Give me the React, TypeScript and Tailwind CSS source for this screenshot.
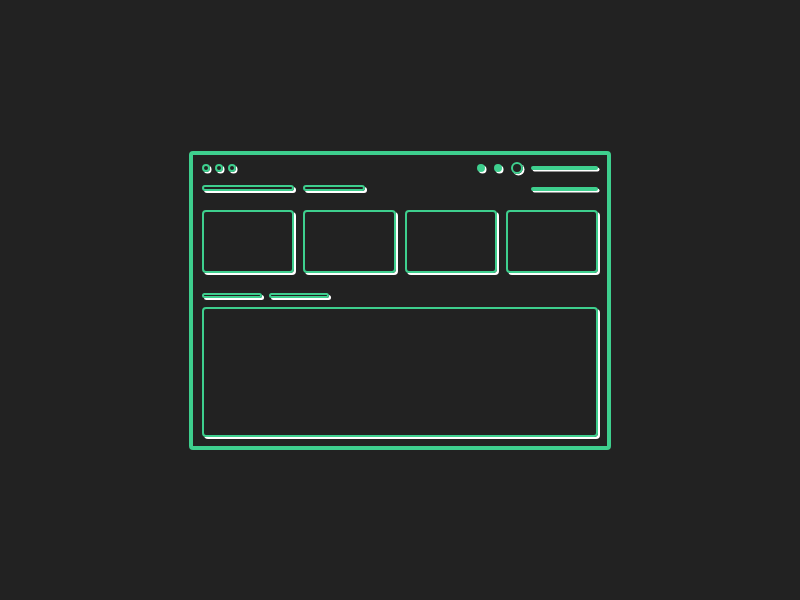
const shadow = 'shadow-[2px_2px_0_#ffffff]'

function Ring({ size = 'w-2 h-2' }: { size?: string }) {
  return <span className={`${size} rounded-full border-2 border-[#3ecf8e] shadow-[1.5px_1.5px_0_#ffffff]`} />
}

function Dot() {
  return <span className="w-2 h-2 rounded-full bg-[#3ecf8e] shadow-[1.5px_1.5px_0_#ffffff]" />
}

function Pill({ width, height = 'h-[6px]' }: { width: string; height?: string }) {
  return <span className={`${width} ${height} rounded-full border-2 border-[#3ecf8e] ${shadow}`} />
}

export default function App() {
  return (
    <div className="w-full h-screen bg-[#222222] flex items-center justify-center">
      <div className="w-[422px] h-[299px] border-4 border-[#3ecf8e] rounded-[4px] px-[9px] pt-[7px] pb-[9px] flex flex-col">
        {/* header */}
        <div className="h-3 flex items-center justify-between">
          <div className="flex items-center gap-[5px]">
            <Ring />
            <Ring />
            <Ring />
          </div>
          <div className="flex items-center gap-[9px]">
            <Dot />
            <Dot />
            <Ring size="w-3 h-3" />
            <span className="w-[67px] h-1 ml-[-1px] rounded-full bg-[#3ecf8e] shadow-[1.5px_1.5px_0_#ffffff]" />
          </div>
        </div>

        {/* nav */}
        <div className="mt-[11px] h-[6px] flex items-center justify-between">
          <div className="flex items-center gap-[9px]">
            <Pill width="w-[92px]" />
            <Pill width="w-[62px]" />
          </div>
          <span className="w-[67px] h-1 mt-[2px] rounded-full bg-[#3ecf8e] shadow-[1.5px_1.5px_0_#ffffff]" />
        </div>

        {/* cards */}
        <div className="mt-[19px] grid grid-cols-4 gap-[9px]">
          {[0, 1, 2, 3].map((i) => (
            <div key={i} className={`h-[63px] rounded-[4px] border-2 border-[#3ecf8e] ${shadow}`} />
          ))}
        </div>

        {/* tabs */}
        <div className="mt-5 flex items-center gap-[7px]">
          <Pill width="w-[60px]" height="h-[5px]" />
          <Pill width="w-[60px]" height="h-[5px]" />
        </div>

        {/* panel */}
        <div className={`mt-[9px] h-[130px] rounded-[4px] border-2 border-[#3ecf8e] ${shadow}`} />
      </div>
    </div>
  )
}
